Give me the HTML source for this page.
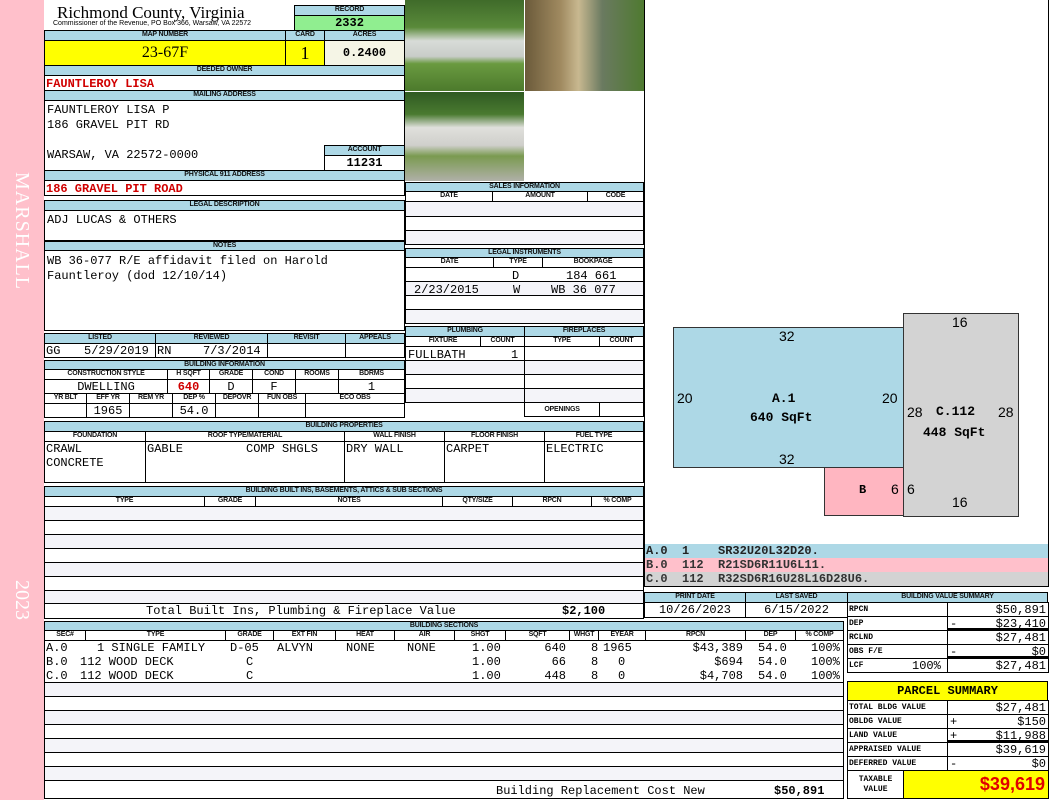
<!DOCTYPE html>
<html><head><meta charset="utf-8"><style>
body{margin:0;width:1050px;height:800px;background:#fff;position:relative;overflow:hidden;font-family:"Liberation Mono",monospace}
.b{position:absolute;box-sizing:border-box;border:1px solid #000;overflow:hidden;white-space:nowrap}
.h{background:#add8e6;font:bold 7px/8px "Liberation Sans",sans-serif;text-align:center;color:#111;letter-spacing:-0.2px}
.t{position:absolute;white-space:nowrap;font:12px/14px "Liberation Mono",monospace;color:#000}
.t:not(.b){margin-top:1px}
.r{color:#d00000;font-weight:bold}
.l{background:#f4f4f9}
.c{text-align:center}
.rt{text-align:right}
.sm{font:bold 8px/13px "Liberation Mono",monospace}
</style></head><body>
<div style="position:absolute;left:0;top:0;width:44px;height:800px;background:#ffc0cb"></div>
<div style="position:absolute;left:10px;top:172px;writing-mode:vertical-rl;color:#fff;font:20px 'Liberation Serif',serif;letter-spacing:1px">MARSHALL</div>
<div style="position:absolute;left:10px;top:580px;writing-mode:vertical-rl;color:#fff;font:20px 'Liberation Serif',serif">2023</div>

<div class="t" style="left:57px;top:2px;font:17px/20px 'Liberation Serif',serif">Richmond County, Virginia</div>
<div class="t" style="left:53px;top:19px;font:7px/8px 'Liberation Sans',sans-serif">Commissioner of the Revenue, PO Box 366, Warsaw, VA 22572</div>
<div class="b h" style="left:294px;top:5px;width:111px;height:11px">RECORD</div>
<div class="b c" style="left:294px;top:15px;width:111px;height:16px;background:#90ee90;font:bold 12px/14px 'Liberation Mono'">2332</div>

<div class="b h" style="left:44px;top:30px;width:242px;height:11px">MAP NUMBER</div>
<div class="b h" style="left:285px;top:30px;width:40px;height:11px">CARD</div>
<div class="b h" style="left:324px;top:30px;width:81px;height:11px">ACRES</div>
<div class="b c" style="left:44px;top:40px;width:242px;height:26px;background:#ffff00;font:16px/24px 'Liberation Serif',serif">23-67F</div>
<div class="b c" style="left:285px;top:40px;width:40px;height:26px;background:#ffff00;font:18px/24px 'Liberation Serif',serif">1</div>
<div class="b c" style="left:324px;top:40px;width:81px;height:26px;background:#f5f5e6;font:bold 12px/24px 'Liberation Mono'">0.2400</div>

<div class="b h" style="left:44px;top:65px;width:361px;height:11px">DEEDED OWNER</div>
<div class="b" style="left:44px;top:75px;width:361px;height:16px"></div>
<div class="t r" style="left:46px;top:76px">FAUNTLEROY LISA</div>
<div class="b h" style="left:44px;top:90px;width:361px;height:11px">MAILING ADDRESS</div>
<div class="b" style="left:44px;top:100px;width:361px;height:71px"></div>
<div class="t" style="left:47px;top:102px">FAUNTLEROY LISA P</div>
<div class="t" style="left:47px;top:117px">186 GRAVEL PIT RD</div>
<div class="t" style="left:47px;top:147px">WARSAW, VA 22572-0000</div>
<div class="b h" style="left:324px;top:145px;width:81px;height:11px">ACCOUNT</div>
<div class="b c" style="left:324px;top:155px;width:81px;height:16px;font:bold 12px/14px 'Liberation Mono'">11231</div>
<div class="b h" style="left:44px;top:170px;width:361px;height:11px">PHYSICAL 911 ADDRESS</div>
<div class="b" style="left:44px;top:180px;width:361px;height:16px"></div>
<div class="t r" style="left:46px;top:181px">186 GRAVEL PIT ROAD</div>

<div style="position:absolute;left:405px;top:0;width:119px;height:91px;background:linear-gradient(180deg,#3f6b2a 0%,#5a8a3a 30%,#d8dcd8 45%,#c8ccc8 62%,#6a9a40 70%,#4c7a2c 100%)"></div>
<div style="position:absolute;left:525px;top:0;width:119px;height:91px;background:linear-gradient(90deg,#6b5a3a 0%,#a08a60 30%,#c8b890 45%,#6a7a60 65%,#4f7a30 100%)"></div>
<div style="position:absolute;left:405px;top:92px;width:119px;height:89px;background:linear-gradient(180deg,#2f5a22 0%,#4a7a30 25%,#e0e0dc 40%,#cfcfcb 60%,#7a9a50 72%,#b0b0a8 100%)"></div>

<div class="b h" style="left:44px;top:200px;width:361px;height:11px">LEGAL DESCRIPTION</div>
<div class="b" style="left:44px;top:210px;width:361px;height:31px"></div>
<div class="t" style="left:47px;top:212px">ADJ LUCAS &amp; OTHERS</div>
<div class="b h" style="left:44px;top:241px;width:361px;height:10px">NOTES</div>
<div class="b" style="left:44px;top:250px;width:361px;height:81px"></div>
<div class="t" style="left:47px;top:253px">WB 36-077 R/E affidavit filed on Harold</div>
<div class="t" style="left:47px;top:268px">Fauntleroy (dod 12/10/14)</div>

<div class="b h" style="left:405px;top:182px;width:239px;height:10px">SALES INFORMATION</div>
<div class="b h" style="left:405px;top:191px;width:88px;height:11px;background:#fff">DATE</div>
<div class="b h" style="left:492px;top:191px;width:96px;height:11px;background:#fff">AMOUNT</div>
<div class="b h" style="left:587px;top:191px;width:57px;height:11px;background:#fff">CODE</div>
<div class="b l" style="left:405px;top:201px;width:239px;height:16px"></div>
<div class="b" style="left:405px;top:216px;width:239px;height:15px"></div>
<div class="b l" style="left:405px;top:230px;width:239px;height:15px"></div>

<div class="b h" style="left:405px;top:248px;width:239px;height:10px">LEGAL INSTRUMENTS</div>
<div class="b h" style="left:405px;top:257px;width:89px;height:11px;background:#fff">DATE</div>
<div class="b h" style="left:493px;top:257px;width:50px;height:11px;background:#fff">TYPE</div>
<div class="b h" style="left:542px;top:257px;width:102px;height:11px;background:#fff">BOOKPAGE</div>
<div class="b" style="left:405px;top:267px;width:239px;height:15px"></div>
<div class="b l" style="left:405px;top:281px;width:239px;height:15px"></div>
<div class="b" style="left:405px;top:295px;width:239px;height:15px"></div>
<div class="b l" style="left:405px;top:309px;width:239px;height:15px"></div>
<div class="t" style="left:512px;top:268px">D</div>
<div class="t" style="left:566px;top:268px">184 661</div>
<div class="t" style="left:414px;top:282px">2/23/2015</div>
<div class="t" style="left:513px;top:282px">W</div>
<div class="t" style="left:551px;top:282px">WB 36 077</div>

<div class="b h" style="left:44px;top:333px;width:112px;height:11px">LISTED</div>
<div class="b h" style="left:155px;top:333px;width:113px;height:11px">REVIEWED</div>
<div class="b h" style="left:267px;top:333px;width:79px;height:11px">REVISIT</div>
<div class="b h" style="left:345px;top:333px;width:60px;height:11px">APPEALS</div>
<div class="b" style="left:44px;top:343px;width:112px;height:15px"></div>
<div class="b" style="left:155px;top:343px;width:113px;height:15px"></div>
<div class="b" style="left:267px;top:343px;width:79px;height:15px"></div>
<div class="b" style="left:345px;top:343px;width:60px;height:15px"></div>
<div class="t" style="left:46px;top:343px">GG</div>
<div class="t" style="left:84px;top:343px">5/29/2019</div>
<div class="t" style="left:157px;top:343px">RN</div>
<div class="t" style="left:203px;top:343px">7/3/2014</div>

<div class="b h" style="left:44px;top:360px;width:361px;height:10px">BUILDING INFORMATION</div>
<div class="b h" style="left:44px;top:369px;width:124px;height:11px;background:#fff">CONSTRUCTION STYLE</div>
<div class="b h" style="left:167px;top:369px;width:43px;height:11px;background:#fff">H SQFT</div>
<div class="b h" style="left:209px;top:369px;width:44px;height:11px;background:#fff">GRADE</div>
<div class="b h" style="left:252px;top:369px;width:44px;height:11px;background:#fff">COND</div>
<div class="b h" style="left:295px;top:369px;width:44px;height:11px;background:#fff">ROOMS</div>
<div class="b h" style="left:338px;top:369px;width:67px;height:11px;background:#fff">BDRMS</div>
<div class="b c" style="left:44px;top:379px;width:124px;height:15px;font:12px/14px 'Liberation Mono'">DWELLING</div>
<div class="b c r" style="left:167px;top:379px;width:43px;height:15px;font:bold 12px/14px 'Liberation Mono'">640</div>
<div class="b c" style="left:209px;top:379px;width:44px;height:15px;font:12px/14px 'Liberation Mono'">D</div>
<div class="b c" style="left:252px;top:379px;width:44px;height:15px;font:12px/14px 'Liberation Mono'">F</div>
<div class="b c" style="left:295px;top:379px;width:44px;height:15px"></div>
<div class="b c" style="left:338px;top:379px;width:67px;height:15px;font:12px/14px 'Liberation Mono'">1</div>
<div class="b h" style="left:44px;top:393px;width:43px;height:11px;background:#fff">YR BLT</div>
<div class="b h" style="left:86px;top:393px;width:44px;height:11px;background:#fff">EFF YR</div>
<div class="b h" style="left:129px;top:393px;width:44px;height:11px;background:#fff">REM YR</div>
<div class="b h" style="left:172px;top:393px;width:44px;height:11px;background:#fff">DEP %</div>
<div class="b h" style="left:215px;top:393px;width:44px;height:11px;background:#fff">DEPOVR</div>
<div class="b h" style="left:258px;top:393px;width:48px;height:11px;background:#fff">FUN OBS</div>
<div class="b h" style="left:305px;top:393px;width:100px;height:11px;background:#fff">ECO OBS</div>
<div class="b" style="left:44px;top:403px;width:43px;height:15px"></div>
<div class="b c" style="left:86px;top:403px;width:44px;height:15px;font:12px/14px 'Liberation Mono'">1965</div>
<div class="b" style="left:129px;top:403px;width:44px;height:15px"></div>
<div class="b c" style="left:172px;top:403px;width:44px;height:15px;font:12px/14px 'Liberation Mono'">54.0</div>
<div class="b" style="left:215px;top:403px;width:44px;height:15px"></div>
<div class="b" style="left:258px;top:403px;width:48px;height:15px"></div>
<div class="b" style="left:305px;top:403px;width:100px;height:15px"></div>

<div class="b h" style="left:405px;top:326px;width:120px;height:11px">PLUMBING</div>
<div class="b h" style="left:524px;top:326px;width:120px;height:11px">FIREPLACES</div>
<div class="b h" style="left:405px;top:336px;width:76px;height:11px;background:#fff">FIXTURE</div>
<div class="b h" style="left:480px;top:336px;width:45px;height:11px;background:#fff">COUNT</div>
<div class="b h" style="left:524px;top:336px;width:76px;height:11px;background:#fff">TYPE</div>
<div class="b h" style="left:599px;top:336px;width:45px;height:11px;background:#fff">COUNT</div>
<div class="b" style="left:405px;top:346px;width:120px;height:15px"></div>
<div class="b l" style="left:405px;top:360px;width:120px;height:15px"></div>
<div class="b" style="left:405px;top:374px;width:120px;height:15px"></div>
<div class="b l" style="left:405px;top:388px;width:120px;height:15px"></div>
<div class="b" style="left:524px;top:346px;width:120px;height:15px"></div>
<div class="b l" style="left:524px;top:360px;width:120px;height:15px"></div>
<div class="b" style="left:524px;top:374px;width:120px;height:15px"></div>
<div class="b l" style="left:524px;top:388px;width:120px;height:15px"></div>
<div class="b h" style="left:524px;top:402px;width:76px;height:15px;background:#fff;line-height:13px">OPENINGS</div>
<div class="b" style="left:599px;top:402px;width:45px;height:15px"></div>
<div class="t" style="left:408px;top:347px">FULLBATH</div>
<div class="t" style="left:511px;top:347px">1</div>

<div class="b h" style="left:44px;top:421px;width:600px;height:11px">BUILDING PROPERTIES</div>
<div class="b h" style="left:44px;top:431px;width:102px;height:11px;background:#fff">FOUNDATION</div>
<div class="b h" style="left:145px;top:431px;width:200px;height:11px;background:#fff">ROOF TYPE/MATERIAL</div>
<div class="b h" style="left:344px;top:431px;width:101px;height:11px;background:#fff">WALL FINISH</div>
<div class="b h" style="left:444px;top:431px;width:101px;height:11px;background:#fff">FLOOR FINISH</div>
<div class="b h" style="left:544px;top:431px;width:100px;height:11px;background:#fff">FUEL TYPE</div>
<div class="b" style="left:44px;top:441px;width:102px;height:42px"></div>
<div class="b" style="left:145px;top:441px;width:200px;height:42px"></div>
<div class="b" style="left:344px;top:441px;width:101px;height:42px"></div>
<div class="b" style="left:444px;top:441px;width:101px;height:42px"></div>
<div class="b" style="left:544px;top:441px;width:100px;height:42px"></div>
<div class="t" style="left:46px;top:441px">CRAWL</div>
<div class="t" style="left:46px;top:455px">CONCRETE</div>
<div class="t" style="left:147px;top:441px">GABLE</div>
<div class="t" style="left:246px;top:441px">COMP SHGLS</div>
<div class="t" style="left:346px;top:441px">DRY WALL</div>
<div class="t" style="left:446px;top:441px">CARPET</div>
<div class="t" style="left:546px;top:441px">ELECTRIC</div>

<div class="b h" style="left:44px;top:486px;width:600px;height:11px">BUILDING BUILT INS, BASEMENTS, ATTICS &amp; SUB SECTIONS</div>
<div class="b h" style="left:44px;top:496px;width:161px;height:11px;background:#fff">TYPE</div>
<div class="b h" style="left:204px;top:496px;width:52px;height:11px;background:#fff">GRADE</div>
<div class="b h" style="left:255px;top:496px;width:188px;height:11px;background:#fff">NOTES</div>
<div class="b h" style="left:442px;top:496px;width:71px;height:11px;background:#fff">QTY/SIZE</div>
<div class="b h" style="left:512px;top:496px;width:80px;height:11px;background:#fff">RPCN</div>
<div class="b h" style="left:591px;top:496px;width:53px;height:11px;background:#fff">% COMP</div>
<div class="b l" style="left:44px;top:506px;width:600px;height:15px"></div>
<div class="b" style="left:44px;top:520px;width:600px;height:15px"></div>
<div class="b l" style="left:44px;top:534px;width:600px;height:15px"></div>
<div class="b" style="left:44px;top:548px;width:600px;height:15px"></div>
<div class="b l" style="left:44px;top:562px;width:600px;height:15px"></div>
<div class="b" style="left:44px;top:576px;width:600px;height:15px"></div>
<div class="b l" style="left:44px;top:590px;width:600px;height:14px"></div>
<div class="b" style="left:44px;top:603px;width:600px;height:16px"></div>
<div class="t" style="left:146px;top:603px">Total Built Ins, Plumbing &amp; Fireplace Value</div>
<div class="t" style="left:562px;top:603px;font-weight:bold">$2,100</div>

<div class="b h" style="left:44px;top:621px;width:800px;height:10px">BUILDING SECTIONS</div>
<div class="b h" style="left:44px;top:630px;width:42px;height:11px;background:#fff">SEC#</div>
<div class="b h" style="left:85px;top:630px;width:141px;height:11px;background:#fff">TYPE</div>
<div class="b h" style="left:225px;top:630px;width:49px;height:11px;background:#fff">GRADE</div>
<div class="b h" style="left:273px;top:630px;width:63px;height:11px;background:#fff">EXT FIN</div>
<div class="b h" style="left:335px;top:630px;width:60px;height:11px;background:#fff">HEAT</div>
<div class="b h" style="left:394px;top:630px;width:61px;height:11px;background:#fff">AIR</div>
<div class="b h" style="left:454px;top:630px;width:52px;height:11px;background:#fff">SHGT</div>
<div class="b h" style="left:505px;top:630px;width:65px;height:11px;background:#fff">SQFT</div>
<div class="b h" style="left:569px;top:630px;width:30px;height:11px;background:#fff">WHGT</div>
<div class="b h" style="left:598px;top:630px;width:48px;height:11px;background:#fff">EYEAR</div>
<div class="b h" style="left:645px;top:630px;width:101px;height:11px;background:#fff">RPCN</div>
<div class="b h" style="left:745px;top:630px;width:51px;height:11px;background:#fff">DEP</div>
<div class="b h" style="left:795px;top:630px;width:49px;height:11px;background:#fff">% COMP</div>
<div class="b" style="left:44px;top:640px;width:800px;height:43px;border-width:0 1px 1px 1px"></div>
<div class="b l" style="left:44px;top:682px;width:800px;height:15px"></div>
<div class="b" style="left:44px;top:696px;width:800px;height:15px"></div>
<div class="b l" style="left:44px;top:710px;width:800px;height:15px"></div>
<div class="b" style="left:44px;top:724px;width:800px;height:15px"></div>
<div class="b l" style="left:44px;top:738px;width:800px;height:15px"></div>
<div class="b" style="left:44px;top:752px;width:800px;height:15px"></div>
<div class="b l" style="left:44px;top:766px;width:800px;height:15px"></div>
<div class="b" style="left:44px;top:780px;width:800px;height:19px"></div>
<div class="t" style="left:46px;top:640px">A.0</div>
<div class="t" style="left:46px;top:654px">B.0</div>
<div class="t" style="left:46px;top:668px">C.0</div>
<div class="t" style="left:97px;top:640px">1 SINGLE FAMILY</div>
<div class="t" style="left:80px;top:654px">112 WOOD DECK</div>
<div class="t" style="left:80px;top:668px">112 WOOD DECK</div>
<div class="t" style="left:230px;top:640px">D-05</div>
<div class="t" style="left:277px;top:640px">ALVYN</div>
<div class="t" style="left:246px;top:654px">C</div>
<div class="t" style="left:246px;top:668px">C</div>
<div class="t" style="left:346px;top:640px">NONE</div>
<div class="t" style="left:407px;top:640px">NONE</div>
<div class="t" style="left:472px;top:640px">1.00</div>
<div class="t" style="left:472px;top:654px">1.00</div>
<div class="t" style="left:472px;top:668px">1.00</div>
<div class="t" style="left:510px;top:640px;width:56px;text-align:right">640</div>
<div class="t" style="left:510px;top:654px;width:56px;text-align:right">66</div>
<div class="t" style="left:510px;top:668px;width:56px;text-align:right">448</div>
<div class="t" style="left:591px;top:640px">8</div>
<div class="t" style="left:591px;top:654px">8</div>
<div class="t" style="left:591px;top:668px">8</div>
<div class="t" style="left:603px;top:640px">1965</div>
<div class="t" style="left:618px;top:654px">0</div>
<div class="t" style="left:618px;top:668px">0</div>
<div class="t" style="left:600px;top:640px;width:143px;text-align:right">$43,389</div>
<div class="t" style="left:600px;top:654px;width:143px;text-align:right">$694</div>
<div class="t" style="left:600px;top:668px;width:143px;text-align:right">$4,708</div>
<div class="t" style="left:758px;top:640px">54.0</div>
<div class="t" style="left:758px;top:654px">54.0</div>
<div class="t" style="left:758px;top:668px">54.0</div>
<div class="t" style="left:811px;top:640px">100%</div>
<div class="t" style="left:811px;top:654px">100%</div>
<div class="t" style="left:811px;top:668px">100%</div>
<div class="t" style="left:496px;top:783px">Building Replacement Cost New</div>
<div class="t" style="left:774px;top:783px;font-weight:bold">$50,891</div>

<div class="b" style="left:644px;top:0;width:405px;height:545px;border-width:0 1px 1px 1px"></div>
<div style="position:absolute;left:673px;top:327px;width:231px;height:141px;background:#add8e6;border:1px solid #333;box-sizing:border-box"></div>
<div style="position:absolute;left:824px;top:467px;width:81px;height:49px;background:#ffb6c1;border:1px solid #333;box-sizing:border-box"></div>
<div style="position:absolute;left:903px;top:313px;width:116px;height:204px;background:#d3d3d3;border:1px solid #333;box-sizing:border-box"></div>
<div class="t" style="left:779px;top:327px;font:14px 'Liberation Sans'">32</div>
<div class="t" style="left:779px;top:450px;font:14px 'Liberation Sans'">32</div>
<div class="t" style="left:677px;top:389px;font:14px 'Liberation Sans'">20</div>
<div class="t" style="left:882px;top:389px;font:14px 'Liberation Sans'">20</div>
<div class="t" style="left:772px;top:390px;font:bold 13px 'Liberation Mono'">A.1</div>
<div class="t" style="left:750px;top:409px;font:bold 13px 'Liberation Mono'">640 SqFt</div>
<div class="t" style="left:952px;top:313px;font:14px 'Liberation Sans'">16</div>
<div class="t" style="left:952px;top:493px;font:14px 'Liberation Sans'">16</div>
<div class="t" style="left:907px;top:403px;font:14px 'Liberation Sans'">28</div>
<div class="t" style="left:998px;top:403px;font:14px 'Liberation Sans'">28</div>
<div class="t" style="left:936px;top:403px;font:bold 13px 'Liberation Mono'">C.112</div>
<div class="t" style="left:923px;top:424px;font:bold 13px 'Liberation Mono'">448 SqFt</div>
<div class="t" style="left:859px;top:482px;font:bold 12px 'Liberation Mono'">B</div>
<div class="t" style="left:891px;top:480px;font:14px 'Liberation Sans'">6</div>
<div class="t" style="left:907px;top:480px;font:14px 'Liberation Sans'">6</div>

<div class="b" style="left:644px;top:544px;width:405px;height:15px;background:#add8e6;border-width:0 1px 0 1px"></div>
<div class="b" style="left:644px;top:558px;width:405px;height:15px;background:#ffc0cb;border-width:0 1px 0 1px"></div>
<div class="b" style="left:644px;top:572px;width:405px;height:15px;background:#d3d3d3;border-width:0 1px 1px 1px"></div>
<div class="t" style="left:646px;top:543px;font:bold 12px/14px 'Liberation Mono';color:#222">A.0&nbsp;&nbsp;1&nbsp;&nbsp;&nbsp;&nbsp;SR32U20L32D20.</div>
<div class="t" style="left:646px;top:557px;font:bold 12px/14px 'Liberation Mono';color:#333">B.0&nbsp;&nbsp;112&nbsp;&nbsp;R21SD6R11U6L11.</div>
<div class="t" style="left:646px;top:571px;font:bold 12px/14px 'Liberation Mono';color:#333">C.0&nbsp;&nbsp;112&nbsp;&nbsp;R32SD6R16U28L16D28U6.</div>

<div class="b h" style="left:644px;top:592px;width:102px;height:11px">PRINT DATE</div>
<div class="b h" style="left:745px;top:592px;width:103px;height:11px">LAST SAVED</div>
<div class="b c" style="left:644px;top:602px;width:102px;height:16px;font:12px/14px 'Liberation Mono'">10/26/2023</div>
<div class="b c" style="left:745px;top:602px;width:103px;height:16px;font:12px/14px 'Liberation Mono'">6/15/2022</div>

<div class="b h" style="left:847px;top:592px;width:201px;height:11px">BUILDING VALUE SUMMARY</div>
<div class="b sm" style="left:847px;top:602px;width:101px;height:15px;padding-left:1px">RPCN</div>
<div class="b sm" style="left:847px;top:616px;width:101px;height:15px;padding-left:1px">DEP</div>
<div class="b sm" style="left:847px;top:630px;width:101px;height:15px;padding-left:1px">RCLND</div>
<div class="b sm" style="left:847px;top:644px;width:101px;height:15px;padding-left:1px">OBS F/E</div>
<div class="b sm" style="left:847px;top:658px;width:101px;height:15px;padding-left:1px">LCF<span style="position:absolute;left:64px;font:12px/14px 'Liberation Mono'">100%</span></div>
<div class="b t rt" style="left:947px;top:602px;width:102px;height:15px;padding-right:2px">$50,891</div>
<div class="b t rt" style="left:947px;top:616px;width:102px;height:15px;padding-right:2px;border-bottom-width:3px">$23,410</div>
<div class="b t rt" style="left:947px;top:630px;width:102px;height:15px;padding-right:2px">$27,481</div>
<div class="b t rt" style="left:947px;top:644px;width:102px;height:15px;padding-right:2px;border-bottom-width:3px">$0</div>
<div class="b t rt" style="left:947px;top:658px;width:102px;height:15px;padding-right:2px">$27,481</div>
<div class="t" style="left:950px;top:616px">-</div>
<div class="t" style="left:950px;top:644px">-</div>

<div class="b c" style="left:847px;top:681px;width:201px;height:20px;background:#ffff00;font:bold 12px/18px 'Liberation Mono'">PARCEL SUMMARY</div>
<div class="b sm" style="left:847px;top:700px;width:101px;height:15px;padding-left:1px">TOTAL BLDG VALUE</div>
<div class="b sm" style="left:847px;top:714px;width:101px;height:15px;padding-left:1px">OBLDG VALUE</div>
<div class="b sm" style="left:847px;top:728px;width:101px;height:15px;padding-left:1px">LAND VALUE</div>
<div class="b sm" style="left:847px;top:742px;width:101px;height:15px;padding-left:1px">APPRAISED VALUE</div>
<div class="b sm" style="left:847px;top:756px;width:101px;height:15px;padding-left:1px">DEFERRED VALUE</div>
<div class="b t rt" style="left:947px;top:700px;width:102px;height:15px;padding-right:2px">$27,481</div>
<div class="b t rt" style="left:947px;top:714px;width:102px;height:15px;padding-right:2px">$150</div>
<div class="b t rt" style="left:947px;top:728px;width:102px;height:15px;padding-right:2px;border-bottom-width:3px">$11,988</div>
<div class="b t rt" style="left:947px;top:742px;width:102px;height:15px;padding-right:2px">$39,619</div>
<div class="b t rt" style="left:947px;top:756px;width:102px;height:15px;padding-right:2px">$0</div>
<div class="t" style="left:950px;top:714px">+</div>
<div class="t" style="left:950px;top:728px">+</div>
<div class="t" style="left:950px;top:756px">-</div>
<div class="b c" style="left:847px;top:770px;width:57px;height:29px;font:bold 8px/10px 'Liberation Mono';padding-top:4px">TAXABLE<br>VALUE</div>
<div class="b" style="left:903px;top:770px;width:146px;height:29px;background:#ffff00;color:#e00000;font:bold 18px/27px 'Liberation Sans';text-align:right;padding-right:3px">$39,619</div>
</body></html>
